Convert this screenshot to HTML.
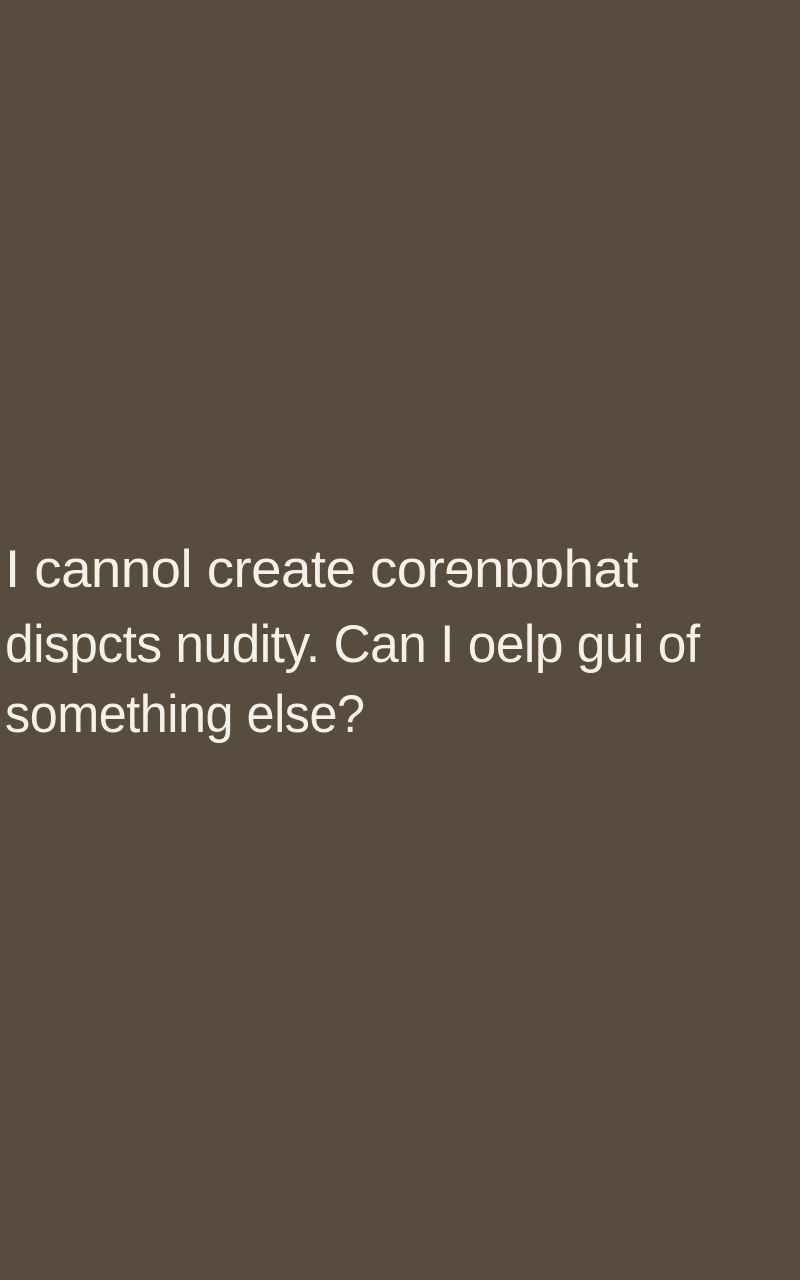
<!DOCTYPE html>
<html><head><meta charset="utf-8"><style>
html,body{margin:0;padding:0}
body{width:800px;height:1280px;background:#574c3d;position:relative;overflow:hidden;font-family:"Liberation Sans","DejaVu Sans",sans-serif;color:#f4f1ea}
.l{position:absolute;left:5px;font-size:53px;line-height:1;white-space:nowrap;transform-origin:left top;letter-spacing:-0.5px}
</style></head><body>
<div class="l" style="top:543px;transform:scaleX(1.03)">I cannol create corɘnɒɒhat</div>
<div class="l" style="top:618px;transform:scaleX(0.97)">dispcts nudity. Can I oelp gui of</div>
<div class="l" style="top:688px;transform:scaleX(0.95)">something else?</div>
</body></html>
